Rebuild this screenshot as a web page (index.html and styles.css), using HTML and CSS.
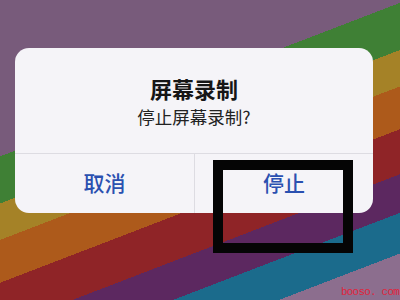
FILE: index.html
```html
<!DOCTYPE html>
<html lang="zh-CN">
<head>
<meta charset="utf-8">
<title>屏幕录制</title>
<link rel="stylesheet" href="styles.css">
</head>
<body>
<div class="screen">
  <div class="dialog">
    <div class="body">
      <div class="title">屏幕录制</div>
      <div class="message">停止屏幕录制?</div>
    </div>
    <div class="actions">
      <div class="btn">取消</div>
      <div class="btn">停止</div>
    </div>
  </div>
  <div class="highlight"></div>
  <div class="watermark">booso. com</div>
</div>
</body>
</html>
```

FILE: styles.css
```css
html, body {
  margin: 0;
  padding: 0;
}
.screen {
  position: relative;
  width: 400px;
  height: 300px;
  overflow: hidden;
  box-sizing: border-box;
  padding: 48px 0 0 15px;
  font-family: "Noto Sans CJK SC", "Noto Sans", sans-serif;
  background: linear-gradient(159deg,
    #785b7b 0px, #785b7b 146px,
    #3f8035 146px, #3f8035 190px,
    #a58227 190px, #a58227 224px,
    #ad5a1b 224px, #ad5a1b 264px,
    #8f2427 264px, #8f2427 306px,
    #5c2860 306px, #5c2860 342px,
    #1b6b8c 342px, #1b6b8c 380px,
    #8c6e8e 380px, #8c6e8e 100%);
}
.dialog {
  width: 358px;
  height: 165px;
  background: #f5f4f8;
  border-radius: 14px;
  display: flex;
  flex-direction: column;
  overflow: hidden;
}
.body {
  height: 106px;
  box-sizing: border-box;
  border-bottom: 1px solid #dddce2;
  display: flex;
  flex-direction: column;
  align-items: center;
  padding-top: 25px;
}
.title {
  font-size: 22px;
  font-weight: 700;
  color: #161616;
  line-height: 30px;
}
.message {
  font-size: 17.5px;
  color: #222;
  line-height: 26px;
  margin-top: 1px;
}
.actions {
  flex: 1;
  display: grid;
  grid-template-columns: 1fr 1fr;
}
.btn {
  display: flex;
  align-items: center;
  justify-content: center;
  font-size: 21px;
  font-weight: 500;
  color: #2a50b0;
  padding-bottom: 3px;
}
.btn + .btn {
  border-left: 1px solid #dddce2;
}
.highlight {
  position: absolute;
  left: 213px;
  top: 160px;
  width: 140px;
  height: 93px;
  box-sizing: border-box;
  border: 10px solid #050505;
}
.watermark {
  position: absolute;
  right: 1px;
  bottom: 2px;
  font-family: "Liberation Mono", monospace;
  font-size: 11px;
  color: #e0243c;
  letter-spacing: -0.8px;
  white-space: pre;
}
```
